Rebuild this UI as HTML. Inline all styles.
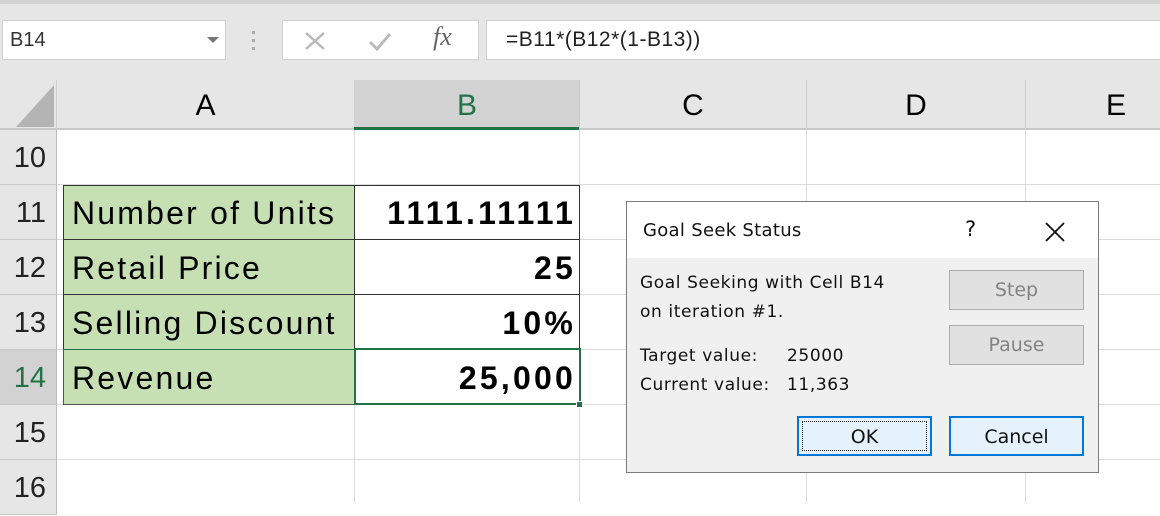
<!DOCTYPE html><html><head><style>
body{margin:0;width:1160px;height:502px;overflow:hidden;background:#fff;font-family:"Liberation Sans",sans-serif;position:relative}
.a{position:absolute;box-sizing:border-box}
.rh{left:0;width:57px;background:#e6e6e6;border-bottom:1px solid #c8c8c8;border-right:1px solid #bdbdbd;font-size:29px;color:#222;text-align:right;padding-right:10px;line-height:56px}
.v{width:1px;background:#dadada;top:130px;height:372px}
.h{height:1px;background:#dadada;left:57px;width:1103px}
.cell{font-size:32px;line-height:55px;color:#000;letter-spacing:2.2px;white-space:nowrap}
.num{font-weight:bold;letter-spacing:3.2px}
.btn{border:1px solid #adadad;background:#e1e1e1;font-size:19px;text-align:center;line-height:38px;font-family:"DejaVu Sans","Liberation Sans",sans-serif}
.dt{font-size:17px;line-height:28.5px;letter-spacing:0.6px}
</style></head><body>
<div class="a" style="left:0;top:0;width:1160px;height:80px;background:#e6e6e6;border-top:4px solid #d2d2d2"></div>
<div class="a" style="left:2px;top:20px;width:224px;height:40px;background:#fff;border:1px solid #d0d0d0;font-size:20px;line-height:38px;padding-left:7px;color:#333">B14</div>
<div class="a" style="left:207px;top:37px;border-left:6px solid transparent;border-right:6px solid transparent;border-top:6px solid #777;width:0;height:0"></div>
<div class="a" style="left:252px;top:31px;width:3px;height:3px;background:#aaa;box-shadow:0 8px #aaa,0 16px #aaa"></div>
<div class="a" style="left:282px;top:20px;width:197px;height:40px;background:#fff;border:1px solid #d0d0d0"></div>
<svg class="a" style="left:303px;top:30px" width="24" height="22"><path d="M3 3L21 19M21 3L3 19" stroke="#b8b8b8" stroke-width="2.5"/></svg>
<svg class="a" style="left:367px;top:30px" width="26" height="22"><path d="M3 12L10 19L23 4" stroke="#bbb" stroke-width="3" fill="none"/></svg>
<div class="a" style="left:433px;top:22px;font-family:'Liberation Serif',serif;font-style:italic;font-size:26px;color:#666">fx</div>
<div class="a" style="left:486px;top:20px;width:674px;height:40px;background:#fff;border:1px solid #d0d0d0;border-right:none;font-size:21px;line-height:38px;padding-left:19px;color:#222;letter-spacing:0.5px">=B11*(B12*(1-B13))</div>
<div class="a" style="left:0;top:80px;width:1160px;height:50px;background:#e6e6e6;border-bottom:2px solid #c8c8c8"></div>
<div class="a" style="left:0;top:80px;width:57px;height:50px;border-right:1px solid #ccc"></div>
<svg class="a" style="left:15px;top:84px" width="40" height="44"><path d="M39 1V43H1Z" fill="#b4b4b4"/></svg>
<div class="a" style="left:354px;top:80px;width:226px;height:50px;background:#d2d2d2;border-bottom:3px solid #217346"></div>
<div class="a" style="left:579px;top:80px;width:1px;height:50px;background:#ccc"></div>
<div class="a" style="left:806px;top:80px;width:1px;height:50px;background:#ccc"></div>
<div class="a" style="left:1025px;top:80px;width:1px;height:50px;background:#ccc"></div>
<div class="a" style="left:57px;top:80px;width:297px;text-align:center;font-size:30px;line-height:52px">A</div>
<div class="a" style="left:354px;top:80px;width:226px;text-align:center;font-size:30px;line-height:52px;color:#217346">B</div>
<div class="a" style="left:580px;top:80px;width:226px;text-align:center;font-size:30px;line-height:52px">C</div>
<div class="a" style="left:807px;top:80px;width:218px;text-align:center;font-size:30px;line-height:52px">D</div>
<div class="a" style="left:1026px;top:80px;width:180px;text-align:center;font-size:30px;line-height:52px">E</div>
<div class="a v" style="left:354px"></div><div class="a v" style="left:579px"></div><div class="a v" style="left:806px"></div><div class="a v" style="left:1025px"></div>
<div class="a h" style="top:184px"></div><div class="a h" style="top:239px"></div><div class="a h" style="top:294px"></div><div class="a h" style="top:349px"></div><div class="a h" style="top:404px"></div><div class="a h" style="top:459px"></div>
<div class="a rh" style="top:130px;height:55px">10</div>
<div class="a rh" style="top:185px;height:55px">11</div>
<div class="a rh" style="top:240px;height:55px">12</div>
<div class="a rh" style="top:295px;height:55px">13</div>
<div class="a rh" style="top:350px;height:55px;background:#d2d2d2;color:#217346">14</div>
<div class="a rh" style="top:405px;height:55px">15</div>
<div class="a rh" style="top:460px;height:55px">16</div>
<div class="a" style="left:63px;top:185px;width:292px;height:220px;background:#c6e0b4"></div>
<div class="a" style="left:63px;top:185px;width:517px;height:165px;border:1px solid #333"></div>
<div class="a" style="left:63px;top:239px;width:517px;height:1px;background:#333"></div>
<div class="a" style="left:63px;top:294px;width:517px;height:1px;background:#333"></div>
<div class="a" style="left:354px;top:185px;width:1px;height:165px;background:#333"></div>
<div class="a" style="left:63px;top:349px;width:292px;height:56px;border:1px solid #217346;border-right:none;border-bottom-color:#555"></div>
<div class="a" style="left:354px;top:348px;width:227px;height:57px;border:2px solid #217346"></div>
<div class="a" style="left:576px;top:401px;width:7px;height:7px;background:#217346;border:1px solid #fff"></div>
<div class="a cell" style="left:72px;top:186px">Number of Units</div>
<div class="a cell" style="left:72px;top:241px">Retail Price</div>
<div class="a cell" style="left:72px;top:296px">Selling Discount</div>
<div class="a cell" style="left:72px;top:351px">Revenue</div>
<div class="a cell num" style="left:300px;width:276px;text-align:right;top:186px">1111.11111</div>
<div class="a cell num" style="left:300px;width:276px;text-align:right;top:241px">25</div>
<div class="a cell num" style="left:300px;width:276px;text-align:right;top:296px">10%</div>
<div class="a cell num" style="left:300px;width:276px;text-align:right;top:351px">25,000</div>
<div class="a" style="left:626px;top:201px;width:473px;height:272px;background:#f0f0f0;border:1px solid #7a7a7a;font-family:'DejaVu Sans','Liberation Sans',sans-serif;color:#111">
<div class="a" style="left:0;top:0;width:471px;height:56px;background:#fff"></div>
<div class="a" style="left:16px;top:18px;font-size:18px;letter-spacing:0.3px">Goal Seek Status</div>
<div class="a" style="left:338px;top:15px;font-size:21px">?</div>
<svg class="a" style="left:417px;top:19px" width="22" height="22"><path d="M2 2L20 20M20 2L2 20" stroke="#111" stroke-width="1.8"/></svg>
<div class="a dt" style="left:13px;top:67px">Goal Seeking with Cell B14<br>on iteration #1.</div>
<div class="a dt" style="left:13px;top:140px">Target value:<br>Current value:</div>
<div class="a dt" style="left:160px;top:140px">25000<br>11,363</div>
<div class="a btn" style="left:322px;top:68px;width:135px;height:40px;color:#838383">Step</div>
<div class="a btn" style="left:322px;top:123px;width:135px;height:40px;color:#838383">Pause</div>
<div class="a btn" style="left:170px;top:214px;width:135px;height:40px;background:#e5f1fb;border:2px solid #0078d7"><div class="a" style="left:3px;top:3px;right:3px;bottom:3px;border:1px dotted #222"></div>OK</div>
<div class="a btn" style="left:322px;top:214px;width:135px;height:40px;background:#e5f1fb;border:2px solid #0078d7">Cancel</div>
</div>
</body></html>
